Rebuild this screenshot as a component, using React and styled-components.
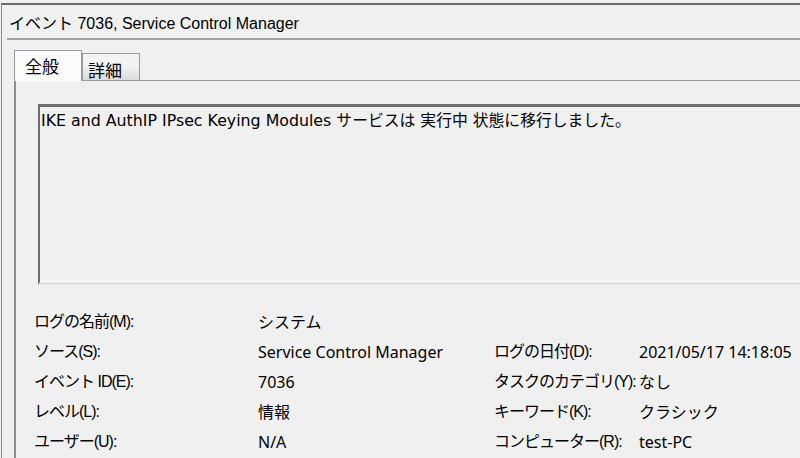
import React from 'react'
import styled, { createGlobalStyle } from 'styled-components'

const GlobalStyle = createGlobalStyle`
	html, body {
		margin: 0;
		padding: 0;
		background: #f0f0f0;
		overflow: hidden;
	}
	body {
		font-family: "Liberation Sans", "Noto Sans CJK JP", sans-serif;
		color: #000;
	}
`

const fields = [
	{ label: 'ログの名前(M):', value: 'システム' },
	{ label: 'ソース(S):', value: 'Service Control Manager', subLabel: 'ログの日付(D):', subValue: '2021/05/17 14:18:05' },
	{ label: 'イベント ID(E):', value: '7036', subLabel: 'タスクのカテゴリ(Y):', subValue: 'なし' },
	{ label: 'レベル(L):', value: '情報', subLabel: 'キーワード(K):', subValue: 'クラシック' },
	{ label: 'ユーザー(U):', value: 'N/A', subLabel: 'コンピューター(R):', subValue: 'test-PC' },
]

export default function App() {
	return (
		<>
			<GlobalStyle />
			<Window>
				<TitleBar>イベント 7036, Service Control Manager</TitleBar>
				<TabStrip>
					<Tab $active>全般</Tab>
					<Tab>詳細</Tab>
				</TabStrip>
				<Panel>
					<MessageBox>
						IKE and AuthIP IPsec Keying Modules サービスは 実行中 状態に移行しました。
					</MessageBox>
					<FieldGrid>
						{fields.map(f => (
							<React.Fragment key={f.label}>
								<Label>{f.label}</Label>
								<Value>{f.value}</Value>
								<Label>{f.subLabel || ''}</Label>
								<Value>{f.subValue || ''}</Value>
							</React.Fragment>
						))}
					</FieldGrid>
				</Panel>
			</Window>
		</>
	)
}

const Window = styled.div`
	margin-top: 3px;
	margin-left: 1px;
	height: 455px;
	box-sizing: border-box;
	border-top: 2px solid #6b6b6b;
	border-left: 1px solid #8c8c8c;
	display: flex;
	flex-flow: column nowrap;
`
const TitleBar = styled.div`
	height: 33px;
	margin-left: 5px;
	padding-left: 2px;
	display: flex;
	align-items: center;
	font-size: 16px;
	border-bottom: 2px solid #a2a2a2;
	white-space: nowrap;
`
const TabStrip = styled.div`
	margin-top: 10px;
	padding-left: 12px;
	height: 30px;
	display: flex;
	align-items: flex-end;
`
const Tab = styled.div`
	box-sizing: border-box;
	width: ${p => (p.$active ? '68px' : '58px')};
	height: ${p => (p.$active ? '31px' : '27px')};
	margin-bottom: ${p => (p.$active ? '-1px' : '0')};
	border: 1px solid #9a9a9a;
	border-bottom: none;
	background: ${p => (p.$active ? '#fbfbfb' : 'linear-gradient(#f3f3f3, #f3f3f3 45%, #dcdcdc)')};
	font-family: "Noto Sans CJK JP", sans-serif;
	font-size: 17px;
	line-height: 1;
	display: flex;
	align-items: flex-start;
	padding-left: ${p => (p.$active ? '10px' : '5px')};
	padding-top: ${p => (p.$active ? '6px' : '7px')};
	position: relative;
	z-index: ${p => (p.$active ? 1 : 0)};
`
const Panel = styled.div`
	flex: 1;
	margin-left: 12px;
	border-top: 1px solid #9a9a9a;
	border-left: 2px solid #8c8c8c;
	padding: 23px 0 0 18px;
	display: flex;
	flex-flow: column nowrap;
`
const MessageBox = styled.div`
	box-sizing: border-box;
	height: 181px;
	margin-left: 4px;
	margin-right: -20px;
	border-top: 3px solid #6e6e6e;
	border-left: 2px solid #6e6e6e;
	border-bottom: 3px solid #e2e2e2;
	padding: 3px 1px;
	font-family: "DejaVu Sans", "Noto Sans CJK JP", sans-serif;
	font-size: 15.8px;
	line-height: 22px;
	white-space: nowrap;
	box-shadow: inset 0 -1px 0 #ffffff;
`
const FieldGrid = styled.div`
	margin-top: 22px;
	display: grid;
	grid-template-columns: 224px 236px 145px auto;
	grid-auto-rows: 30px;
	font-size: 16px;
	line-height: 30px;
	white-space: nowrap;
`
const Label = styled.div`
	letter-spacing: -1px;
`
const Value = styled.div`
	font-family: "Noto Sans", "Noto Sans CJK JP", sans-serif;
`
